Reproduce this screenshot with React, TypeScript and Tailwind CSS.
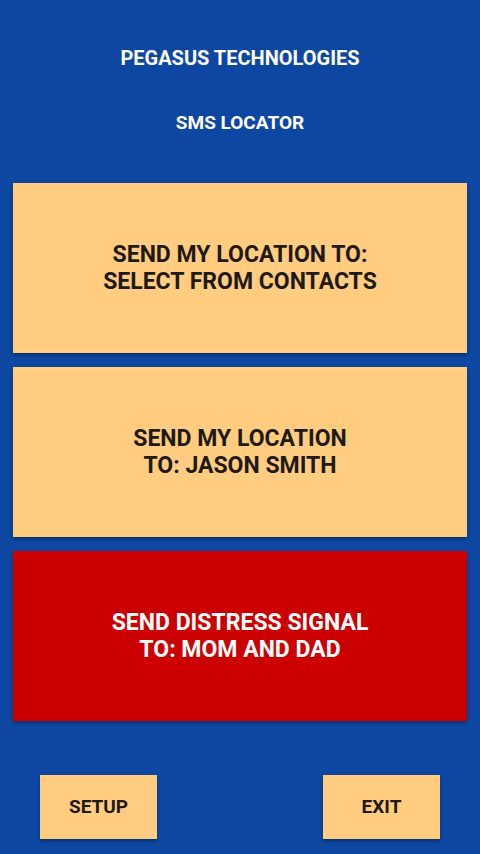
export default function App() {
  const bigBtn =
    'mx-[13px] h-[170px] flex items-center justify-center text-center text-[23px] leading-[27px] font-bold shadow-[0_2px_3px_rgba(0,0,0,0.35)]';

  return (
    <div
      className="w-[480px] h-[854px] bg-[#0d47a1] flex flex-col"
      style={{ fontFamily: 'Roboto, "Liberation Sans", sans-serif' }}
    >
      {/* Header */}
      <div className="pt-[45px] text-center text-white font-bold text-[20px] leading-[26px]">
        PEGASUS TECHNOLOGIES
      </div>
      <div className="mt-[39px] text-center text-white font-bold text-[19px] leading-[26px]">
        SMS LOCATOR
      </div>

      {/* Main actions */}
      <div className="mt-[47px] flex flex-col gap-[14px]">
        <button className={`${bigBtn} bg-[#ffcc80] text-[#211a14]`}>
          SEND MY LOCATION TO:
          <br />
          SELECT FROM CONTACTS
        </button>
        <button className={`${bigBtn} bg-[#ffcc80] text-[#211a14]`}>
          SEND MY LOCATION
          <br />
          TO: JASON SMITH
        </button>
        <button className={`${bigBtn} bg-[#cc0000] text-white`}>
          SEND DISTRESS SIGNAL
          <br />
          TO: MOM AND DAD
        </button>
      </div>

      {/* Bottom buttons */}
      <div className="mt-[54px] flex justify-between px-[40px]">
        <button className="w-[117px] h-[64px] bg-[#ffcc80] text-[#211a14] font-bold text-[19px] shadow-[0_2px_3px_rgba(0,0,0,0.35)]">
          SETUP
        </button>
        <button className="w-[117px] h-[64px] bg-[#ffcc80] text-[#211a14] font-bold text-[19px] shadow-[0_2px_3px_rgba(0,0,0,0.35)]">
          EXIT
        </button>
      </div>
    </div>
  );
}
